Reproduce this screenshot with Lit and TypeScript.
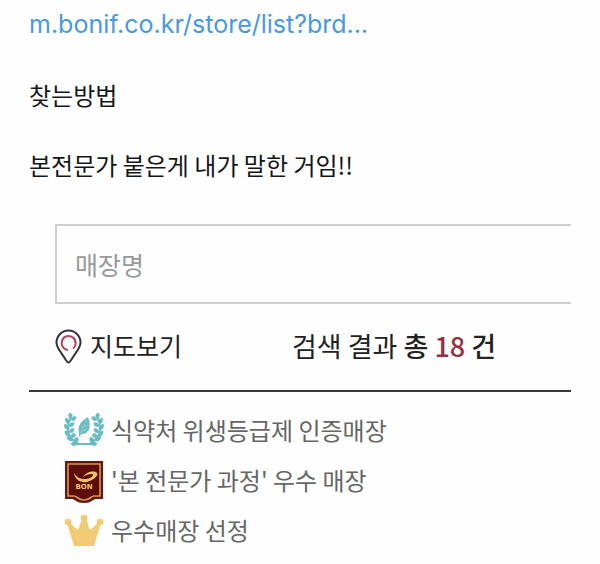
import { LitElement, html, css, svg } from "lit";
import { customElement } from "lit/decorators.js";

const branch = svg`
  <path d="M14 37C7 34 4 29 4 23C4 18 5 14 7 10" fill="none" stroke="#68bcc2" stroke-width="2"/>
  <g stroke="#68bcc2" stroke-width=".9">
    <path d="M7 12C4 11 4 9 6 7C8 8 9 10 7 12Z"/>
    <path d="M7 14C8 11 10 10 12 11C12 14 10 15 7 14Z"/>
    <path d="M4 18C2 17 1 14 2 12C5 13 5 15 4 18Z"/>
    <path d="M5 20C6 17 8 16 10 17C10 20 8 21 5 20Z"/>
    <path d="M4 24C1 23 0 21 1 18C4 19 4 21 4 24Z"/>
    <path d="M5 26C6 23 8 22 10 23C10 26 8 27 5 26Z"/>
    <path d="M5 30C2 30 1 28 1 25C4 25 5 27 5 30Z"/>
    <path d="M7 31C7 28 9 27 11 28C12 31 10 32 7 31Z"/>
    <path d="M8 35C5 35 3 33 3 31C6 30 8 32 8 35Z"/>
    <path d="M10 35C10 32 12 31 14 32C15 35 13 36 10 35Z"/>
    <path d="M13 38C11 40 9 40 7 38C8 36 11 35 13 38Z"/>
  </g>`;

const laurel = html`<svg class="mark" viewBox="0 0 40 50" aria-hidden="true">
  <g fill="#68bcc2">
    <g>${branch}</g>
    <g transform="translate(40 0) scale(-1 1)">${branch}</g>
    <path d="M13 37H27V39H13Z"/>
    <path d="M24 11C26 16 27 23 23 26C21 28 19 28 17 28L16 31L15 30L15 27C13 19 18 15 24 11Z"/>
  </g>
  <path d="M23 14L16 28M21 18V21L24 19M19 22L17 20M18 25L23 23" fill="none" stroke="#a5d8dc" stroke-width=".6"/>
</svg>`;

const badge = html`<svg class="mark" viewBox="0 0 40 50" aria-hidden="true">
  <path d="M1 5H39V43H32C29 43 28 47 20 47C12 47 11 43 8 43H1Z" fill="#651410"/>
  <path d="M4 8H36V40H30C27 40 26 44 20 44C14 44 13 40 10 40H4Z" fill="#5c0d0c" stroke="#d19a57" stroke-width="1.6"/>
  <path d="M10 17C11 24 17 27 23 26C30 24 35 19 33 17C30 14 22 16 19 21C23 18 29 17 29 19C28 22 24 23 20 23C15 23 12 20 10 17Z" fill="#f1c566"/>
  <text class="brand" x="20" y="33" text-anchor="middle">BON</text>
</svg>`;

const crown = html`<svg class="mark" viewBox="0 0 40 50" aria-hidden="true">
  <g fill="#f2cb74">
    <circle cx="4" cy="16" r="3.3"/><circle cx="20" cy="12" r="3.3"/><circle cx="36" cy="16" r="3.3"/>
    <path d="M10 40L3 17L6 17L14 24L18 13H22L26 24L34 17L37 17L30 40Z"/>
  </g>
</svg>`;

@customElement("app-root")
export class AppRoot extends LitElement {
  static styles = css`
    :host {
      display: block;
      padding: 5px 29px 8px;
      background: #fefefe;
      color: #14171a;
      font-family: "Noto Sans CJK KR", sans-serif;
      font-size: 24px;
      line-height: 35px;
    }
    .post { display: grid; gap: 35px; }
    .post p { margin: 0; }
    .link {
      color: #4a99de;
      font-family: Inter, "Noto Sans CJK KR", sans-serif;
      font-size: 25px;
      text-decoration: none;
    }
    .search { display: flex; margin: 42px 0 0 26px; }
    .field {
      box-sizing: border-box;
      flex: 1;
      min-width: 0;
      height: 80px;
      padding: 0 18px;
      border: 2px solid #cdcdcd;
      border-right: 0;
      border-radius: 0;
      background: transparent;
      color: #222;
      font: inherit;
      outline: 0;
    }
    .field::placeholder { color: #999; opacity: 1; }
    .field, .bar { font-size: 25px; }
    .bar {
      display: flex;
      align-items: center;
      gap: 110px;
      height: 86px;
      padding-left: 26px;
      border-bottom: 2px solid #3a383a;
      color: #222;
      white-space: nowrap;
    }
    .map {
      display: flex;
      align-items: center;
      gap: 8px;
      padding: 0;
      border: 0;
      background: none;
      color: inherit;
      font: inherit;
    }
    .pin { width: 27px; height: 36px; }
    .label { padding-bottom: 4px; }
    .count { margin: 0; font-size: 27px; }
    .total { font-weight: 500; }
    .number { color: #963044; }
    .legend { margin: 0; padding: 14px 0 0 35px; list-style: none; color: #666; }
    .item { display: flex; align-items: center; gap: 7px; height: 50px; }
    .mark { flex: none; width: 40px; height: 50px; }
    .brand { fill: #f1c566; font: bold 7px "DejaVu Sans", sans-serif; }
  `;

  render() {
    return html`
      <section class="post">
        <p><a class="link" href="https://m.bonif.co.kr/store/list">m.bonif.co.kr/store/list?brd…</a></p>
        <p>찾는방법</p>
        <p>본전문가 붙은게 내가 말한 거임!!</p>
      </section>
      <form class="search">
        <input class="field" type="text" placeholder="매장명" aria-label="매장명">
      </form>
      <div class="bar">
        <button class="map" type="button">
          <svg class="pin" viewBox="0 0 27 36" fill="none" stroke-width="2" aria-hidden="true">
            <path d="M13.5 33.5C12 33.5 11 31 8 26.5C4 21 1.5 18 1.5 13.5A12 12 0 0 1 25.5 13.5C25.5 18 23 21 19 26.5C16 31 15 33.5 13.5 33.5Z" stroke="#333"/>
            <path d="M13 21A7 7 0 1 1 18 19.5" stroke="#b54258"/>
          </svg>
          <span class="label">지도보기</span>
        </button>
        <p class="count label">검색 결과 <span class="total">총 <span class="number">18</span> 건</span></p>
      </div>
      <ul class="legend">
        <li class="item">${laurel}<span class="label">식약처 위생등급제 인증매장</span></li>
        <li class="item">${badge}<span class="label">'본 전문가 과정' 우수 매장</span></li>
        <li class="item">${crown}<span class="label">우수매장 선정</span></li>
      </ul>
    `;
  }
}
